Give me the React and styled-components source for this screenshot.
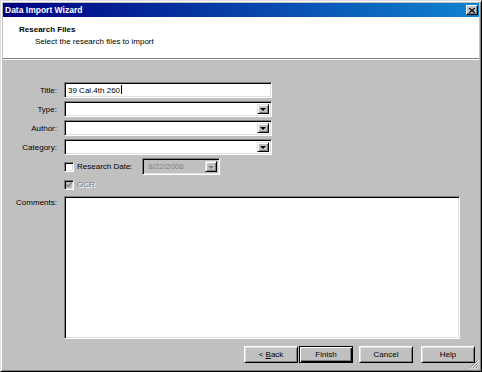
import React from 'react'
import styled, { createGlobalStyle } from 'styled-components'

const GlobalStyle = createGlobalStyle`
	html, body {
		margin: 0;
		padding: 0;
		background: #c0c0c0;
	}

	body {
		font-family: "Liberation Sans", Arial, sans-serif;
		font-size: 8px;
		color: #000;
	}
`

const Window = styled.div`
	box-sizing: border-box;
	width: 482px;
	height: 372px;
	display: flex;
	flex-direction: column;
	position: relative;
	background: #c0c0c0;
	border: 1px solid;
	border-color: #dfdfdf #000 #000 #dfdfdf;
	box-shadow: inset 1px 1px #fff, inset -1px -1px #808080;
	padding: 2px;
`

const TitleBar = styled.div`
	height: 14px;
	display: flex;
	align-items: center;
	justify-content: space-between;
	padding: 0 1px 0 2px;
	background: linear-gradient(to right, #000080, #1084d0);
	color: #fff;
	font-weight: bold;
	font-size: 8.5px;
`

const CloseButton = styled.div`
	box-sizing: border-box;
	width: 12px;
	height: 10px;
	display: flex;
	align-items: center;
	justify-content: center;
	background: #c0c0c0;
	border: 1px solid;
	border-color: #fff #000 #000 #fff;
	box-shadow: inset -1px -1px #808080;
`

const Header = styled.div`
	height: 41px;
	box-sizing: border-box;
	padding: 7px 0 0 16px;
	background: #fff;
	line-height: 12px;
`

const HeaderTitle = styled.div`
	font-weight: bold;
`

const HeaderText = styled.div`
	padding-left: 16px;
`

const Divider = styled.div`
	border-top: 1px solid #808080;
	border-bottom: 1px solid #fff;
`

const Body = styled.div`
	flex: 1;
	display: flex;
	flex-direction: column;
	padding: 0 4px 6px 0;
	min-height: 0;
`

const Form = styled.div`
	flex: 1;
	display: grid;
	grid-template-columns: 54px 1fr;
	grid-template-rows: 16px 16px 16px 16px 17px 13px 1fr;
	column-gap: 7px;
	row-gap: 3px;
	align-items: center;
	padding: 22px 15px 0 0;
	min-height: 0;
`

const Label = styled.label`
	text-align: right;
	align-self: ${p => (p.$top ? 'start' : 'center')};
	padding-top: ${p => (p.$top ? '4px' : '0')};
	white-space: nowrap;
`

const Sunken = styled.div`
	box-sizing: border-box;
	height: 100%;
	width: ${p => p.$w || '100%'};
	display: flex;
	align-items: center;
	background: ${p => (p.$disabled ? '#c0c0c0' : '#fff')};
	border: 1px solid;
	border-color: #808080 #fff #fff #808080;
	box-shadow: inset 1px 1px #000, inset -1px -1px #dfdfdf;
	padding: 2px;
	color: ${p => (p.$disabled ? '#808080' : '#000')};
`

const FieldText = styled.span`
	flex: 1;
	padding-left: 1px;
	white-space: nowrap;
`

const Caret = styled.span`
	display: inline-block;
	width: 1px;
	height: 9px;
	background: #000;
	vertical-align: -1px;
	margin-left: 1px;
`

const DropButton = styled.div`
	box-sizing: border-box;
	width: 12px;
	height: 100%;
	display: flex;
	align-items: center;
	justify-content: center;
	background: #c0c0c0;
	border: 1px solid;
	border-color: #dfdfdf #000 #000 #dfdfdf;
	box-shadow: inset 1px 1px #fff, inset -1px -1px #808080;
`

const Arrow = styled.span`
	width: 0;
	height: 0;
	border-left: 3px solid transparent;
	border-right: 3px solid transparent;
	border-top: 3px solid ${p => (p.$disabled ? '#808080' : '#000')};
	margin-top: 1px;
`

const CommentBox = styled(Sunken)`
	align-self: stretch;
	margin-top: 2px;
	height: auto;
`

const CheckRow = styled.div`
	grid-column: 2;
	display: flex;
	align-items: center;
	height: 100%;
`

const Check = styled.div`
	box-sizing: border-box;
	width: 10px;
	height: 10px;
	display: flex;
	align-items: center;
	justify-content: center;
	background: ${p => (p.$disabled ? '#c0c0c0' : '#fff')};
	border: 1px solid;
	border-color: #808080 #fff #fff #808080;
	box-shadow: inset 1px 1px #000, inset -1px -1px #dfdfdf;
`

const CheckText = styled.span`
	width: ${p => p.$w || 'auto'};
	margin-left: 3px;
	color: ${p => (p.$disabled ? '#808080' : '#000')};
	text-shadow: ${p => (p.$disabled ? '1px 1px #fff' : 'none')};
	white-space: nowrap;
`

const Footer = styled.div`
	display: flex;
	justify-content: flex-end;
	align-items: center;
	height: 17px;
	margin-top: 7px;
`

const Button = styled.div`
	box-sizing: border-box;
	width: 54px;
	height: 17px;
	display: flex;
	align-items: center;
	justify-content: center;
	margin-left: ${p => p.$gap || 0}px;
	background: #c0c0c0;
	white-space: pre;
	border: 1px solid;
	border-color: ${p => (p.$default ? '#000' : '#fff #000 #000 #fff')};
	box-shadow: ${p =>
		p.$default
			? 'inset 1px 1px #fff, inset -1px -1px #000, inset -2px -2px #808080'
			: 'inset 1px 1px #dfdfdf, inset -1px -1px #808080'};

	& u {
		text-decoration: underline;
	}
`

const Grip = styled.svg`
	position: absolute;
	right: 2px;
	bottom: 2px;
`

const Dropdown = () => (
	<Sunken $w="208px">
		<FieldText />
		<DropButton><Arrow /></DropButton>
	</Sunken>
)

const App = () => (
	<>
		<GlobalStyle />
		<Window>
			<TitleBar>
				<span>Data Import Wizard</span>
				<CloseButton>
					<svg width="6" height="5" viewBox="0 0 6 5">
						<path d="M0 0L6 5M6 0L0 5" stroke="#000" strokeWidth="1.3" />
					</svg>
				</CloseButton>
			</TitleBar>
			<Header>
				<HeaderTitle>Research Files</HeaderTitle>
				<HeaderText>Select the research files to import</HeaderText>
			</Header>
			<Divider />
			<Body>
				<Form>
					<Label>Title:</Label>
					<Sunken $w="208px">
						<FieldText>39 Cal.4th 260<Caret /></FieldText>
					</Sunken>

					<Label>Type:</Label>
					<Dropdown />

					<Label>Author:</Label>
					<Dropdown />

					<Label>Category:</Label>
					<Dropdown />

					<CheckRow>
						<Check />
						<CheckText $w="65px">Research Date:</CheckText>
						<Sunken $w="78px" $disabled>
							<FieldText>&nbsp;8/22/2008</FieldText>
							<DropButton><Arrow $disabled /></DropButton>
						</Sunken>
					</CheckRow>

					<CheckRow>
						<Check $disabled>
							<svg width="6" height="6" viewBox="0 0 6 6">
								<path d="M0.5 2.5L2.3 4.5L5.5 0.8" stroke="#808080" strokeWidth="1.3" fill="none" />
							</svg>
						</Check>
						<CheckText $disabled>OCR</CheckText>
					</CheckRow>

					<Label $top>Comments:</Label>
					<CommentBox />
				</Form>
				<Footer>
					<Button>{'< '}<u>B</u>ack</Button>
					<Button $default $gap={1}>Finish</Button>
					<Button $gap={6}>Cancel</Button>
					<Button $gap={8}>Help</Button>
				</Footer>
			</Body>
			<Grip width="10" height="10" viewBox="0 0 10 10">
				<path d="M9 1L1 9M9 4L4 9M9 7L7 9" stroke="#808080" strokeWidth="1" />
				<path d="M10 1L1 10M10 4L4 10M10 7L7 10" stroke="#fff" strokeWidth="1" />
			</Grip>
		</Window>
	</>
)

export default App
